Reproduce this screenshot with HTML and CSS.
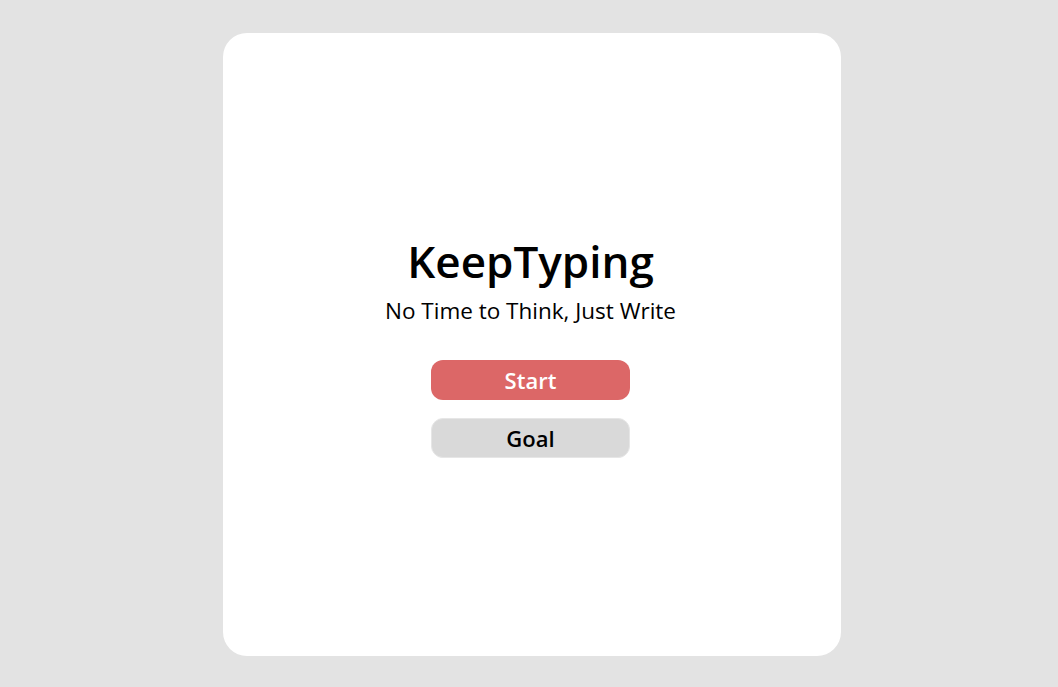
FILE: index.html
```html
<!DOCTYPE html>
<html lang="en">
<head>
<meta charset="utf-8">
<title>KeepTyping</title>
<link rel="stylesheet" href="styles.css">
</head>
<body>
<main class="card">
  <h1 class="title">KeepTyping</h1>
  <p class="subtitle">No Time to Think, Just Write</p>
  <div class="actions">
    <button class="btn btn-start">Start</button>
    <button class="btn btn-goal">Goal</button>
  </div>
</main>
</body>
</html>
```
FILE: styles.css
```css
html, body {
  margin: 0;
  padding: 0;
  height: 100%;
}
body {
  background: #e3e3e3;
  font-family: "Open Sans", "Noto Sans", sans-serif;
  display: flex;
  align-items: center;
  justify-content: center;
  padding-left: 6px;
  padding-top: 2px;
  box-sizing: border-box;
}
.card {
  width: 618px;
  height: 623px;
  background: #ffffff;
  border-radius: 24px;
  display: flex;
  flex-direction: column;
  align-items: center;
  justify-content: flex-start;
  padding: 202px 3px 0 0;
  box-sizing: border-box;
}
.title {
  margin: 0;
  font-size: 44px;
  font-weight: 600;
  color: #000;
  line-height: 53px;
}
.subtitle {
  margin: 9px 0 0;
  font-size: 22.5px;
  color: #000;
  line-height: 27px;
}
.actions {
  display: flex;
  flex-direction: column;
  gap: 18px;
  margin-top: 36px;
}
.btn {
  width: 199px;
  height: 40px;
  border-radius: 12px;
  font-family: inherit;
  font-size: 22px;
  font-weight: 600;
  cursor: pointer;
  padding: 0;
}
.btn-start {
  background: #dc6767;
  color: #fff;
  border: none;
}
.btn-goal {
  background: #d9d9d9;
  color: #000;
  border: 1px solid #e6e6e6;
}
```
